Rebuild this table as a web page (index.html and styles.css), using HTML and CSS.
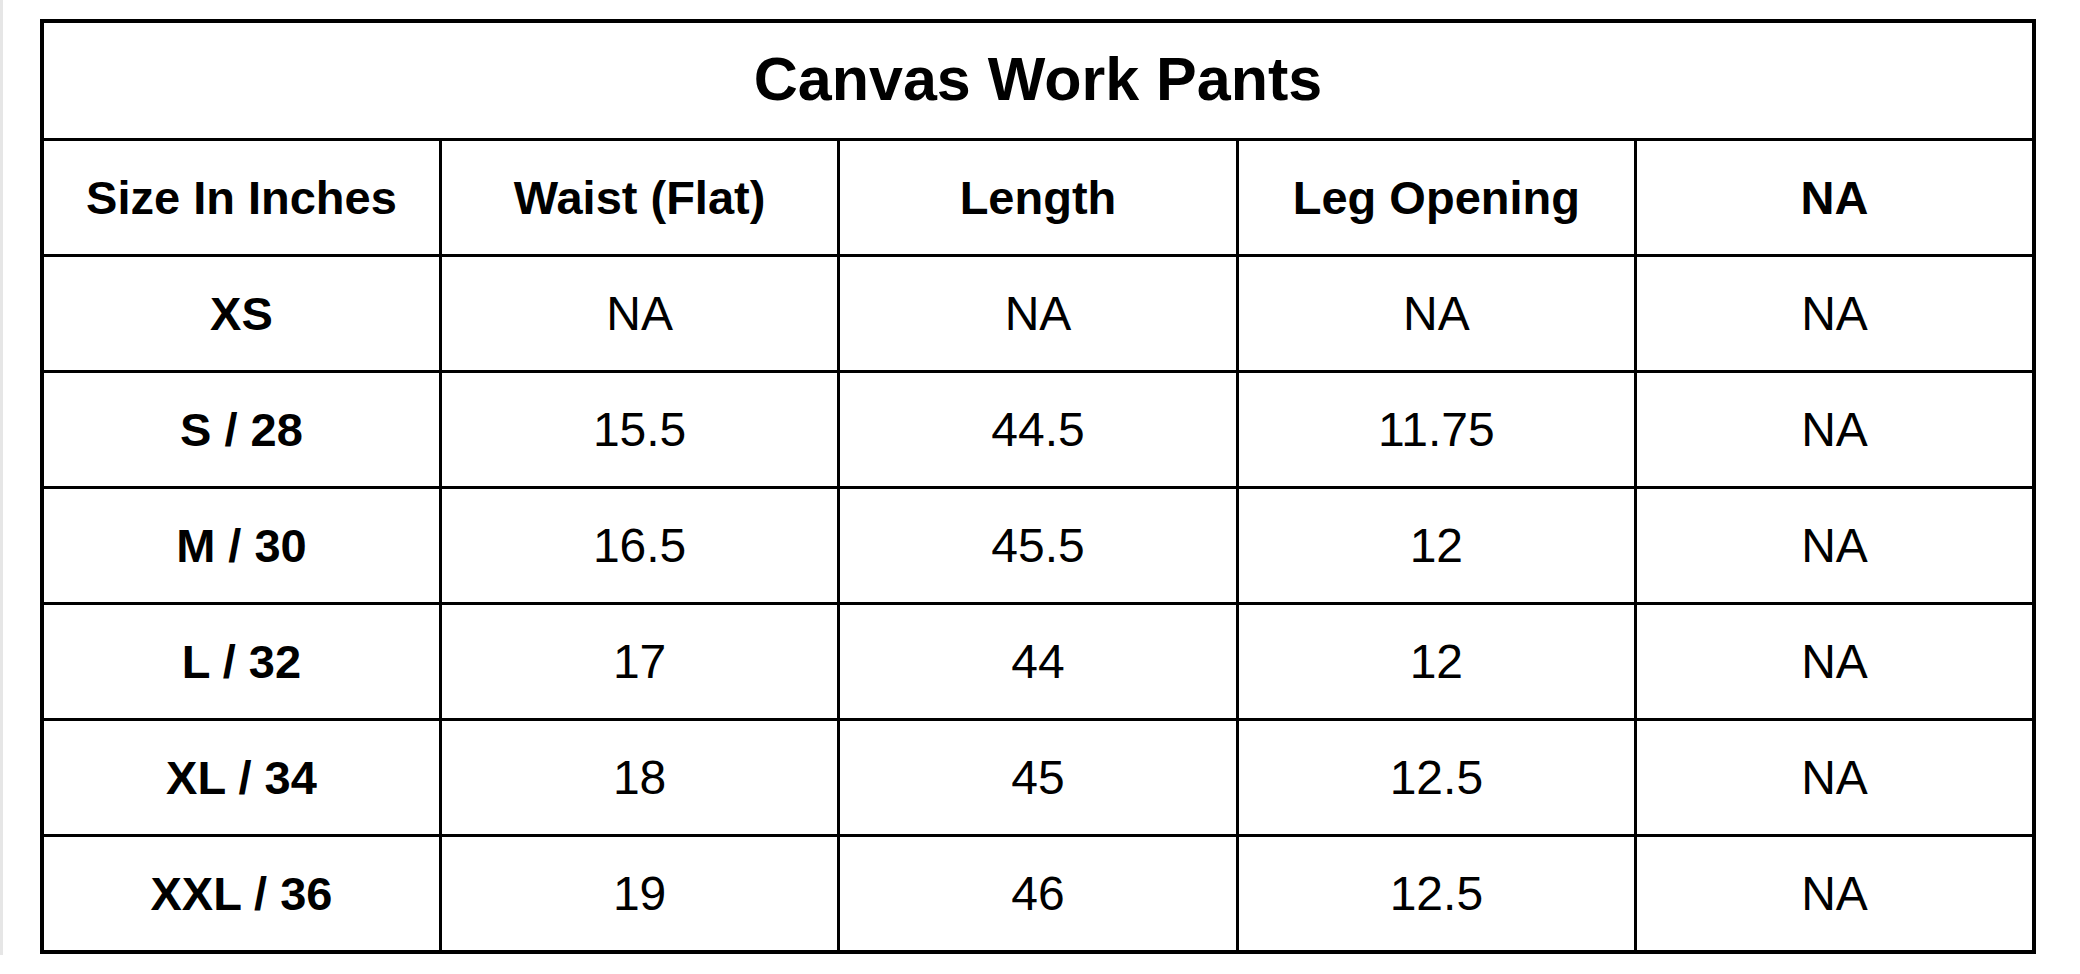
FILE: index.html
```html
<!DOCTYPE html>
<html>
<head>
<meta charset="utf-8">
<link rel="stylesheet" href="styles.css">
</head>
<body>
<div class="page">
  <table class="size-chart">
    <tr class="title-row"><th colspan="5" class="title">Canvas Work Pants</th></tr>
    <tr>
      <th>Size In Inches</th>
      <th>Waist (Flat)</th>
      <th>Length</th>
      <th>Leg Opening</th>
      <th>NA</th>
    </tr>
    <tr><th>XS</th><td>NA</td><td>NA</td><td>NA</td><td>NA</td></tr>
    <tr><th>S / 28</th><td>15.5</td><td>44.5</td><td>11.75</td><td>NA</td></tr>
    <tr><th>M / 30</th><td>16.5</td><td>45.5</td><td>12</td><td>NA</td></tr>
    <tr><th>L / 32</th><td>17</td><td>44</td><td>12</td><td>NA</td></tr>
    <tr><th>XL / 34</th><td>18</td><td>45</td><td>12.5</td><td>NA</td></tr>
    <tr><th>XXL / 36</th><td>19</td><td>46</td><td>12.5</td><td>NA</td></tr>
  </table>
</div>
</body>
</html>
```
FILE: styles.css
```css
html, body {
  margin: 0;
  padding: 0;
  background: #ffffff;
}
body {
  font-family: "Liberation Sans", Arial, sans-serif;
  color: #000;
}
.page {
  border-left: 3px solid #e6e6e6;
  padding: 19px 0 0 37px;
  height: 955px;
  box-sizing: border-box;
}
.size-chart {
  border-collapse: collapse;
  width: 1996px;
  table-layout: fixed;
  border: 4px solid #000;
}
.size-chart th,
.size-chart td {
  border: 3px solid #000;
  height: 113px;
  padding: 0;
  text-align: center;
  vertical-align: middle;
  font-size: 47px;
  line-height: 1;
}
.size-chart th {
  font-weight: bold;
}
.size-chart td {
  font-weight: normal;
  font-size: 48px;
}
.size-chart th.title {
  font-size: 61px;
  padding-bottom: 2px;
}
```
